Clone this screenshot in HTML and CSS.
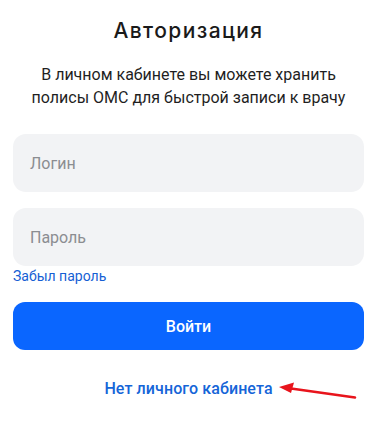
FILE: index.html
```html
<!DOCTYPE html>
<html lang="ru">
<head>
<meta charset="utf-8">
<link rel="stylesheet" href="styles.css">
</head>
<body>
<main class="auth">
  <h1 class="auth__title">Авторизация</h1>
  <p class="auth__text">В личном кабинете вы можете хранить полисы ОМС для быстрой записи к врачу</p>
  <div class="auth__field"><span class="auth__placeholder">Логин</span></div>
  <div class="auth__field auth__field--second"><span class="auth__placeholder">Пароль</span></div>
  <a class="auth__forgot" href="#">Забыл пароль</a>
  <button class="auth__button" type="button">Войти</button>
  <div class="auth__bottom">
    <a class="auth__register" href="#">Нет личного кабинета</a>
    <svg class="auth__arrow" width="80" height="20" viewBox="0 0 80 20">
      <line x1="12" y1="6.5" x2="76" y2="15.5" stroke="#e8141c" stroke-width="2.6" stroke-linecap="round"/>
      <polygon points="0,5 15,0.5 12,11" fill="#e8141c"/>
    </svg>
  </div>
</main>
</body>
</html>
```
FILE: styles.css
```css
html, body {
  margin: 0;
  padding: 0;
  background: #ffffff;
}
.auth {
  padding: 17px 14px 0 13px;
  display: flex;
  flex-direction: column;
  font-family: Roboto, "Liberation Sans", sans-serif;
}
.auth__title {
  margin: 0;
  text-align: center;
  font-family: Inter, "Noto Sans", sans-serif;
  font-weight: 500;
  font-size: 21px;
  letter-spacing: 1.4px;
  line-height: 28px;
  color: #1a1a1a;
}
.auth__text {
  margin: 18px 8px 0;
  text-align: center;
  font-size: 16px;
  line-height: 23px;
  color: #1f1f1f;
}
.auth__field {
  margin-top: 25px;
  height: 58px;
  border-radius: 13px;
  background: #f2f3f5;
  display: flex;
  align-items: center;
  padding: 0 17px;
}
.auth__field--second {
  margin-top: 16px;
}
.auth__placeholder {
  font-size: 16px;
  color: #8b8d91;
}
.auth__forgot {
  margin-top: 2px;
  align-self: flex-start;
  font-size: 14px;
  line-height: 17px;
  color: #1560d4;
  text-decoration: none;
}
.auth__button {
  margin-top: 17px;
  height: 48px;
  border: none;
  border-radius: 12px;
  background: #0a66ff;
  color: #ffffff;
  font-family: Roboto, "Liberation Sans", sans-serif;
  font-size: 16px;
  font-weight: 500;
}
.auth__bottom {
  position: relative;
  margin-top: 29px;
  text-align: center;
  line-height: 20px;
}
.auth__register {
  font-size: 16px;
  font-weight: 500;
  letter-spacing: 0.1px;
  color: #1565d8;
  text-decoration: none;
}
.auth__arrow {
  position: absolute;
  left: 266px;
  top: 3px;
}
```
